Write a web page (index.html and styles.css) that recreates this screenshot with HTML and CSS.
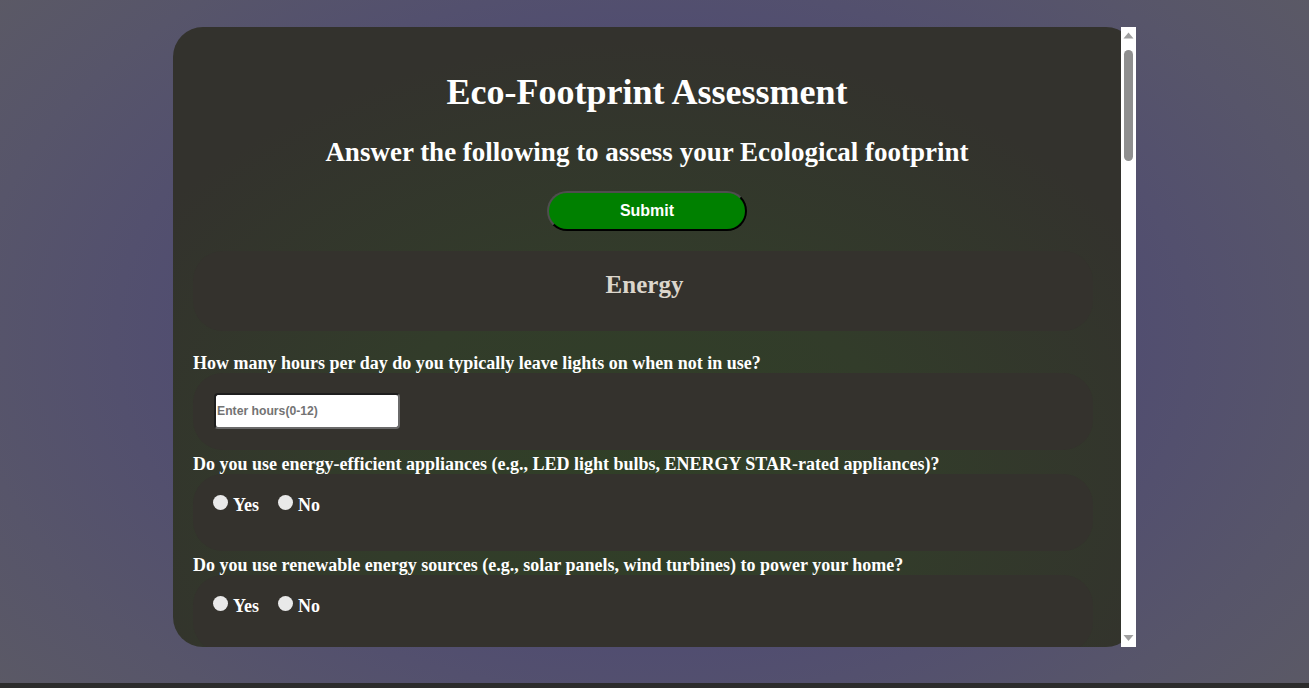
FILE: index.html
```html
<!DOCTYPE html>
<html lang="en">
<head>
<meta charset="utf-8">
<title>Eco-Footprint Assessment</title>
<link rel="stylesheet" href="styles.css">
</head>
<body>
<div class="stage">
  <main class="panel">
    <div class="viewport">
      <h1 class="title">Eco-Footprint Assessment</h1>
      <h2 class="subtitle">Answer the following to assess your Ecological footprint</h2>
      <div class="actions"><button class="submit" type="button">Submit</button></div>

      <section class="section">
        <div class="section-head"><h3>Energy</h3></div>
        <p class="q">How many hours per day do you typically leave lights on when not in use?</p>
        <div class="card"><input class="num" type="text" placeholder="Enter hours(0-12)"></div>
        <p class="q">Do you use energy-efficient appliances (e.g., LED light bulbs, ENERGY STAR-rated appliances)?</p>
        <div class="card"><div class="opts"><label class="opt"><span class="dot"></span>Yes</label><label class="opt"><span class="dot"></span>No</label></div></div>
        <p class="q">Do you use renewable energy sources (e.g., solar panels, wind turbines) to power your home?</p>
        <div class="card"><div class="opts"><label class="opt"><span class="dot"></span>Yes</label><label class="opt"><span class="dot"></span>No</label></div></div>
        <p class="q">How many hours per day is your heating or air conditioning running?</p>
        <div class="card"><input class="num" type="text" placeholder="Enter hours(0-24)"></div>
        <p class="q">Do you unplug electronic devices when they are not in use?</p>
        <div class="card"><div class="opts"><label class="opt"><span class="dot"></span>Yes</label><label class="opt"><span class="dot"></span>No</label></div></div>
      </section>

      <section class="section">
        <div class="section-head"><h3>Transportation</h3></div>
        <p class="q">How many kilometres do you drive per week?</p>
        <div class="card"><input class="num" type="text" placeholder="Enter km"></div>
        <p class="q">Do you regularly use public transportation?</p>
        <div class="card"><div class="opts"><label class="opt"><span class="dot"></span>Yes</label><label class="opt"><span class="dot"></span>No</label></div></div>
        <p class="q">Do you walk or cycle for short trips?</p>
        <div class="card"><div class="opts"><label class="opt"><span class="dot"></span>Yes</label><label class="opt"><span class="dot"></span>No</label></div></div>
        <p class="q">How many flights do you take per year?</p>
        <div class="card"><input class="num" type="text" placeholder="Enter flights(0-50)"></div>
        <p class="q">Do you carpool with others?</p>
        <div class="card"><div class="opts"><label class="opt"><span class="dot"></span>Yes</label><label class="opt"><span class="dot"></span>No</label></div></div>
      </section>

      <section class="section">
        <div class="section-head"><h3>Waste</h3></div>
        <p class="q">How many bags of trash does your household produce per week?</p>
        <div class="card"><input class="num" type="text" placeholder="Enter bags(0-10)"></div>
        <p class="q">Do you recycle paper, plastic, glass and metal?</p>
        <div class="card"><div class="opts"><label class="opt"><span class="dot"></span>Yes</label><label class="opt"><span class="dot"></span>No</label></div></div>
        <p class="q">Do you compost food scraps?</p>
        <div class="card"><div class="opts"><label class="opt"><span class="dot"></span>Yes</label><label class="opt"><span class="dot"></span>No</label></div></div>
        <p class="q">Do you avoid single-use plastics?</p>
        <div class="card"><div class="opts"><label class="opt"><span class="dot"></span>Yes</label><label class="opt"><span class="dot"></span>No</label></div></div>
      </section>

      <section class="section">
        <div class="section-head"><h3>Food</h3></div>
        <p class="q">How many meals with meat do you eat per week?</p>
        <div class="card"><input class="num" type="text" placeholder="Enter meals(0-21)"></div>
        <p class="q">Do you buy locally grown or seasonal food?</p>
        <div class="card"><div class="opts"><label class="opt"><span class="dot"></span>Yes</label><label class="opt"><span class="dot"></span>No</label></div></div>
        <p class="q">Do you grow some of your own food?</p>
        <div class="card"><div class="opts"><label class="opt"><span class="dot"></span>Yes</label><label class="opt"><span class="dot"></span>No</label></div></div>
        <p class="q">Do you try to reduce food waste?</p>
        <div class="card"><div class="opts"><label class="opt"><span class="dot"></span>Yes</label><label class="opt"><span class="dot"></span>No</label></div></div>
      </section>

      <section class="section last">
        <div class="section-head"><h3>Water</h3></div>
        <p class="q">How many minutes do you typically spend in the shower?</p>
        <div class="card"><input class="num" type="text" placeholder="Enter minutes(0-60)"></div>
        <p class="q">Do you turn off the tap while brushing your teeth?</p>
        <div class="card"><div class="opts"><label class="opt"><span class="dot"></span>Yes</label><label class="opt"><span class="dot"></span>No</label></div></div>
        <p class="q">Do you use water-saving fixtures (e.g., low-flow showerheads, dual-flush toilets)?</p>
        <div class="card"><div class="opts"><label class="opt"><span class="dot"></span>Yes</label><label class="opt"><span class="dot"></span>No</label></div></div>
        <p class="q">Do you collect rainwater for your garden?</p>
        <div class="card"><div class="opts"><label class="opt"><span class="dot"></span>Yes</label><label class="opt"><span class="dot"></span>No</label></div></div>
      </section>
    </div>
    <div class="scrollbar" aria-hidden="true">
      <svg class="arrow" width="15" height="15" viewBox="0 0 15 15"><path d="M2.5 11.5 L7.5 5.5 L12.5 11.5 Z" fill="#a0a0a0"/></svg>
      <div class="track"><div class="thumb"></div></div>
      <svg class="arrow" width="15" height="15" viewBox="0 0 15 15"><path d="M2.5 3 L7.5 9 L12.5 3 Z" fill="#a0a0a0"/></svg>
    </div>
  </main>
</div>
<div class="baseline"></div>
</body>
</html>
```

FILE: styles.css
```css
html, body {
  margin: 0;
  padding: 0;
}

body {
  background: #2c2c2c;
  font-family: "Liberation Serif", "Times New Roman", serif;
  height: 688px;
  overflow: hidden;
}

.stage {
  height: 683px;
  box-sizing: border-box;
  padding-top: 27px;
  display: flex;
  justify-content: center;
  align-items: flex-start;
  background: radial-gradient(ellipse 75% 95% at 50% 50%, #4b4877 0%, #4f4b72 40%, #57556a 70%, #5e5d61 100%);
}

.panel {
  width: 963px;
  height: 620px;
  display: flex;
  border-radius: 30px;
  background: radial-gradient(ellipse 62% 70% at 48% 72%, #303f27 0%, #323c2a 45%, #33322d 100%);
}

.viewport {
  flex: 1;
  min-width: 0;
  overflow-y: auto;
  scrollbar-width: none;
  border-radius: 30px 0 0 30px;
}

.title {
  margin: 45px 0 0;
  text-align: center;
  color: #ffffff;
  font-size: 36px;
  font-weight: bold;
  line-height: 41px;
}

.subtitle {
  margin: 24px 0 0;
  text-align: center;
  color: #ffffff;
  font-size: 27px;
  font-weight: bold;
  line-height: 31px;
}

.actions {
  display: flex;
  justify-content: center;
  margin-top: 23px;
}

.submit {
  width: 200px;
  height: 40px;
  border-radius: 20px;
  background: #008000;
  color: #ffffff;
  font-family: "Liberation Sans", Arial, sans-serif;
  font-size: 16px;
  font-weight: bold;
  border-width: 2px;
  border-style: solid;
  border-color: #4e4e4e #000000 #000000 #4e4e4e;
  padding: 0;
}

.section {
  margin: 20px 0 0 20px;
}

.section.last {
  padding-bottom: 40px;
}

.section-head {
  width: 900px;
  height: 80px;
  box-sizing: border-box;
  padding-top: 20px;
  border-radius: 30px;
  background: #34322d;
}

.section-head h3 {
  margin: 0;
  text-align: center;
  color: #dcd6cc;
  font-size: 25px;
  font-weight: bold;
  line-height: 28px;
  padding-left: 3px;
}

.q {
  margin: 4px 0 0;
  color: #ffffff;
  font-size: 18px;
  font-weight: bold;
  line-height: 20px;
}

.section-head + .q {
  margin-top: 22px;
}

.card {
  width: 900px;
  height: 77px;
  box-sizing: border-box;
  padding: 20px 21px;
  border-radius: 30px;
  background: #34322d;
}

.num {
  width: 186px;
  height: 36px;
  box-sizing: border-box;
  margin: 0;
  padding: 0 1px;
  border-radius: 4px;
  border-width: 2px;
  border-style: solid;
  border-color: #1e1e1e #6a6a6a #6a6a6a #1e1e1e;
  background: #ffffff;
  font-family: "Liberation Sans", Arial, sans-serif;
  font-size: 12.2px;
  font-weight: bold;
  color: #333333;
}

.num::placeholder {
  color: #737373;
}

.opts {
  display: flex;
  gap: 20px;
}

.opt {
  display: flex;
  align-items: flex-start;
  color: #ffffff;
  font-size: 18px;
  font-weight: bold;
  line-height: 20px;
  padding-top: 1px;
}

.dot {
  width: 15px;
  height: 15px;
  border-radius: 50%;
  background: #e9e9e9;
  margin: 0 5px 0 -1px;
}

.scrollbar {
  width: 15px;
  flex: none;
  display: flex;
  flex-direction: column;
  background: #ffffff;
}

.arrow {
  display: block;
  flex: none;
}

.track {
  flex: 1;
  padding: 8px 3px 0;
}

.thumb {
  height: 111px;
  border-radius: 5px;
  background: #8f8f8f;
}

.baseline {
  height: 5px;
  background: #2c2c2c;
}
```
